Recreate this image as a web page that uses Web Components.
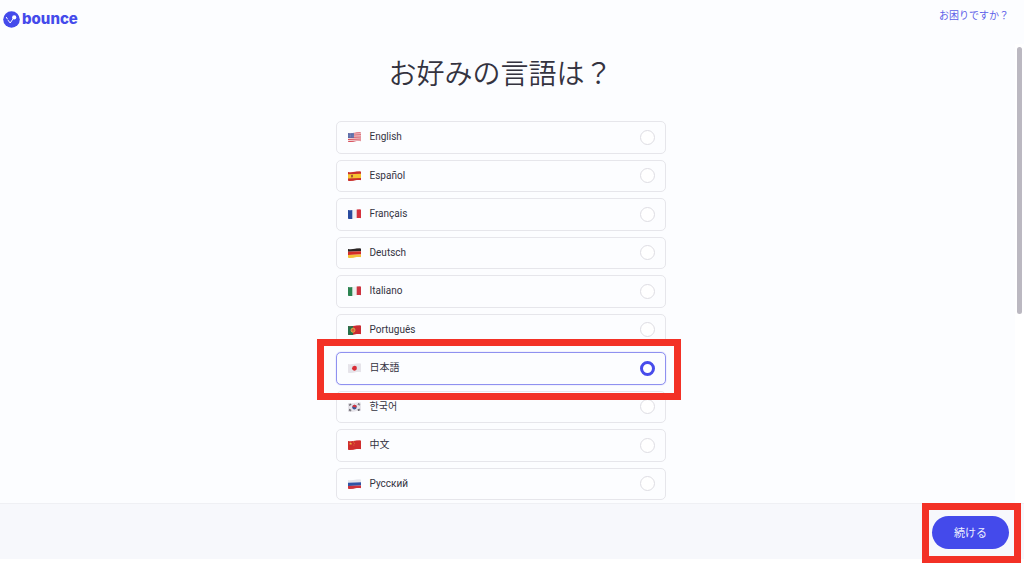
<!DOCTYPE html>
<html lang="ja">
<head>
<meta charset="utf-8">
<title>bounce</title>
<style>
html, body { margin: 0; background: #fff; }
body { box-sizing: border-box; min-height: 100vh; padding-bottom: 15px; font-family: Roboto, "Noto Sans CJK JP", sans-serif; color: #34333f; }
</style>
</head>
<body>
<language-page></language-page>
<script>
const base = '<style>*{box-sizing:border-box}:host{display:block}</style>';

class BounceLogo extends HTMLElement {
  connectedCallback() {
    this.attachShadow({ mode: 'open' }).innerHTML = base + `
<style>
a { display: flex; align-items: center; gap: 2px; color: #444aeb; text-decoration: none; font-family: Inter, sans-serif; font-size: 15px; line-height: 18px; font-weight: 800; }
svg { display: block; width: 17px; height: 17px; }
</style>
<a href="#"><svg viewBox="0 0 17 17" aria-hidden="true"><circle cx="8.5" cy="8.5" r="8.3" fill="#444aeb"/><circle cx="11.2" cy="6.4" r="2.1" fill="#fff"/><path d="M3.4 6.4l1 1.6M5.2 9.4l2 2.6 3.4-5" fill="none" stroke="#fff" stroke-width="1" stroke-linecap="round" stroke-linejoin="round"/></svg><span>bounce</span></a>`;
  }
}
customElements.define('bounce-logo', BounceLogo);

class PageHeader extends HTMLElement {
  connectedCallback() {
    this.attachShadow({ mode: 'open' }).innerHTML = base + `
<style>
:host { display: flex; justify-content: space-between; align-items: flex-start; height: 44px; padding: 10px 15px 0 3px; }
.help { color: #5c60e8; text-decoration: none; font-size: 10px; line-height: 12px; }
</style>
<bounce-logo></bounce-logo><a class="help" href="#">お困りですか？</a>`;
  }
}
customElements.define('page-header', PageHeader);

const flags = {
  us: '<path fill="#f1dcdf" d="M0 0h13v9H0z"/><path stroke="#d9505c" d="M0 .5h13M0 2.5h13M0 4.5h13M0 6.5h13M0 8.5h13"/><path fill="#5265a5" d="M0 0h6v5H0z"/><path stroke="#b9c1de" stroke-width=".6" stroke-dasharray=".7 .8" d="M.7 1.2h5M.7 2.6h5M.7 4h5"/>',
  es: '<path fill="#c92f2c" d="M0 0h13v9H0z"/><path fill="#f6c431" d="M0 2.4h13v4.2H0z"/><path fill="#a95a32" d="M3 3.2h2v2.4H3z"/>',
  fr: '<path fill="#eef0f5" d="M0 0h13v9H0z"/><path fill="#294b9f" d="M0 0h4.3v9H0z"/><path fill="#d5323d" d="M8.7 0H13v9H8.7z"/>',
  de: '<path fill="#2b2525" d="M0 0h13v3H0z"/><path fill="#d52d28" d="M0 3h13v3H0z"/><path fill="#f3c33c" d="M0 6h13v3H0z"/>',
  it: '<path fill="#eef0f0" d="M0 0h13v9H0z"/><path fill="#2c8451" d="M0 0h4.3v9H0z"/><path fill="#cd3340" d="M8.7 0H13v9H8.7z"/>',
  pt: '<path fill="#cb2b32" d="M0 0h13v9H0z"/><path fill="#27704a" d="M0 0h5v9H0z"/><circle cx="5" cy="4.5" r="2" fill="#d75e3b" stroke="#e5b94a" stroke-width=".8"/>',
  jp: '<path fill="#e6e4ea" d="M0 0h13v9H0z"/><circle cx="6.5" cy="4.5" r="2.4" fill="#d92d35"/>',
  kr: '<path fill="#e6e4ea" d="M0 0h13v9H0z"/><circle cx="6.5" cy="4.5" r="2.2" fill="#3b5799"/><path fill="#d23540" d="M4.3 4.5a2.2 2.2 0 014.4 0c-1.5 1-2.5-1-4.4 0z"/><path stroke="#45434b" stroke-width="1.8" stroke-dasharray=".6 .3" d="M1.2 2.5L3 1.3M10 1.3l1.8 1.2M1.2 6.6L3 7.8M10 7.8l1.8-1.2"/>',
  cn: '<path fill="#cf2e2d" d="M0 0h13v9H0z"/><path fill="#efbd42" d="M2.6 1.4l.4 1.1h1.2l-.9.7.3 1.1-1-.7-1 .7.3-1.1L1 2.5h1.2zM5 1h.7v.7H5zM6 2.3h.7V3H6zM5.6 4h.7v.7h-.7z"/>',
  ru: '<path fill="#e4e6ec" d="M0 0h13v3H0z"/><path fill="#3054a6" d="M0 3h13v3H0z"/><path fill="#cf333b" d="M0 6h13v3H0z"/>'
};

class FlagIcon extends HTMLElement {
  connectedCallback() {
    this.attachShadow({ mode: 'open' }).innerHTML = base + `
<style>svg { display: block; width: 13px; height: 10px; }</style>
<svg viewBox="0 0 13 10" aria-hidden="true"><defs><clipPath id="wave"><path d="M0 .9C3 1.6 5 1 7 .5S11 0 13 .4V9.2c-2-.4-4-.3-6 .2s-4 .9-7 .3z"/></clipPath></defs><g clip-path="url(#wave)"><g transform="translate(0 .7) skewY(-2) scale(1 1.04)">${flags[this.getAttribute('code')]}</g></g></svg>`;
  }
}
customElements.define('flag-icon', FlagIcon);

class LanguageOption extends HTMLElement {
  connectedCallback() {
    const on = this.hasAttribute('checked');
    this.attachShadow({ mode: 'open' }).innerHTML = base + `
<style>
:host { position: relative; }
label { display: flex; align-items: center; height: 100%; padding: 0 10px 0 11px; border: 1px solid #e6e6eb; border-radius: 5px; font-size: 10px; line-height: 14px; cursor: pointer; }
.name { flex: 1; margin-left: 9px; }
input { appearance: none; width: 15px; height: 15px; margin: 0; border: 1px solid #dedde3; border-radius: 50%; background: #fff; }
:host([checked]) label { border-color: #8f91f0; box-shadow: 0 0 1px #8f91f0; }
input:checked { border: 3px solid #484ceb; }
</style>
<label><flag-icon code="${this.getAttribute('flag')}"></flag-icon><span class="name"><slot></slot></span><input type="radio" name="language"${on ? ' checked' : ''}></label>
<slot name="mark"></slot>`;
  }
}
customElements.define('language-option', LanguageOption);

/* Red frame laid over the control it points out. */
class HighlightFrame extends HTMLElement {
  connectedCallback() {
    this.attachShadow({ mode: 'open' }).innerHTML = base + `
<style>:host { position: absolute; z-index: 2; inset: var(--frame-inset); border: 7px solid #f33126; pointer-events: none; }</style>`;
  }
}
customElements.define('highlight-frame', HighlightFrame);

class LanguagePicker extends HTMLElement {
  connectedCallback() {
    this.attachShadow({ mode: 'open' }).innerHTML = base + `
<style>
:host { padding: 8px 14px 3px 0; }
h1 { margin: 0 0 28px; font-size: 28px; line-height: 41px; font-weight: 350; text-align: center; font-family: "Noto Sans CJK JP", sans-serif; }
.list { display: grid; grid-auto-rows: 1fr; gap: 6px; width: 100%; max-width: 330px; min-height: 379px; margin: 0 auto; }
highlight-frame { --frame-inset: -13px -15px -15px -19px; }
</style>
<h1>お好みの言語は？</h1>
<div class="list" role="radiogroup" aria-label="お好みの言語は？">
<language-option flag="us">English</language-option>
<language-option flag="es">Español</language-option>
<language-option flag="fr">Français</language-option>
<language-option flag="de">Deutsch</language-option>
<language-option flag="it">Italiano</language-option>
<language-option flag="pt">Português</language-option>
<language-option flag="jp" checked>日本語<highlight-frame slot="mark"></highlight-frame></language-option>
<language-option flag="kr"><span lang="ko" style="font-family:Roboto,'Noto Sans CJK KR',sans-serif">한국어</span></language-option>
<language-option flag="cn">中文</language-option>
<language-option flag="ru">Русский</language-option>
</div>`;
  }
}
customElements.define('language-picker', LanguagePicker);

class ScrollTrack extends HTMLElement {
  connectedCallback() {
    this.attachShadow({ mode: 'open' }).innerHTML = base + `
<style>
:host { width: 9px; padding: 3px 2px; background: #fff; }
.thumb { height: 59%; border-radius: 3px; background: #bbb8c1; }
</style><div class="thumb"></div>`;
  }
}
customElements.define('scroll-track', ScrollTrack);

class PageFooter extends HTMLElement {
  connectedCallback() {
    this.attachShadow({ mode: 'open' }).innerHTML = base + `
<style>
:host { display: flex; justify-content: flex-end; padding: 12px 15px 10px; border-top: 1px solid #eff0f4; background: #f7f8fc; }
.action { position: relative; }
button { display: block; padding: 8px 22px; border: 0; border-radius: 17px; background: #444aeb; color: #eeefff; font: 11px/17px "Noto Sans CJK JP", sans-serif; cursor: pointer; }
highlight-frame { --frame-inset: -13px -12px -14px -10px; }
</style>
<div class="action"><button type="button">続ける</button><highlight-frame></highlight-frame></div>`;
  }
}
customElements.define('page-footer', PageFooter);

class LanguagePage extends HTMLElement {
  connectedCallback() {
    this.attachShadow({ mode: 'open' }).innerHTML = base + `
<style>
:host { background: #fcfdff; }
.content { display: flex; }
language-picker { flex: 1; }
</style>
<page-header></page-header>
<main class="content"><language-picker></language-picker><scroll-track></scroll-track></main>
<page-footer></page-footer>`;
  }
}
customElements.define('language-page', LanguagePage);
</script>
</body>
</html>
